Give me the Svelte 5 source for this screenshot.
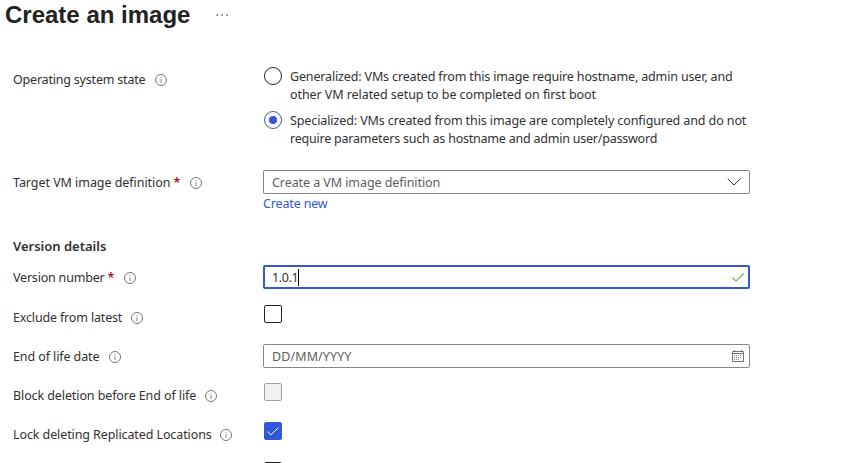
<script>
  let version = $state('1.0.1');
  const options = [
    { selected: false, lines: [['Generalized: VMs created from this image require hostname, admin user, and', -0.15], ['other VM related setup to be completed on first boot', -0.07]] },
    { selected: true, lines: [['Specialized: VMs created from this image are completely configured and do not', -0.105], ['require parameters such as hostname and admin user/password', -0.22]] }
  ];
</script>

{#snippet label(text, width, tracking, required = false)}
  <div class="label">
    <span class="name" style:width="{width}px"><span style:letter-spacing="{tracking}px">{text}</span>{#if required}<b class="star">*</b>{/if}</span>
    <svg class="info" width="12" height="12" viewBox="0 0 12 12" fill="none">
      <circle cx="6" cy="6" r="5.5" stroke="#666" stroke-width="0.9" />
      <path d="M6 5v4M6 3v1" stroke="#888" />
    </svg>
  </div>
{/snippet}

<main>
  <header>
    <h1>Create an image</h1>
    <svg width="12" height="2" viewBox="0 0 12 2" fill="#666"><path d="M.5 .2h1.6v1.5H.5zM5.3 .2h1.6v1.5H5.3zM10.2 .2h1.6v1.5h-1.6z" /></svg>
  </header>

  <section class="form">
    <div class="row os">
      {@render label('Operating system state', 133, -0.2)}
      <div class="radios">
        {#each options as option}
          <div class="option">
            <span class="radio" class:selected={option.selected}></span>
            <p>{#each option.lines as [line, tracking]}<span style:letter-spacing="{tracking}px">{line}</span>{/each}</p>
          </div>
        {/each}
      </div>
    </div>

    <div class="row target">
      {@render label('Target VM image definition', 168, -0.05, true)}
      <div>
        <div class="field">
          <span class="choice">Create a VM image definition</span>
          <svg class="chevron" width="14" height="8" viewBox="0 0 14 8" fill="none" stroke="#333" stroke-width="1"><path d="M.7.7 7 7 13.3.7" /></svg>
        </div>
        <a href="#new">Create new</a>
      </div>
    </div>

    <h2>Version details</h2>

    <div class="row">
      {@render label('Version number', 102, -0.2, true)}
      <div class="field focused">
        <span class="value">{version}</span><i class="caret"></i>
        <svg class="tick" width="12" height="9" viewBox="0 0 12 9" fill="none" stroke="#5cb82c" stroke-width="1.1"><path d="M.4 4.6 4 8.1 11.6.5" /></svg>
      </div>
    </div>
    <div class="row lower">
      {@render label('Exclude from latest', 109, -0.16)}
      <span class="box"></span>
    </div>
    <div class="row lower">
      {@render label('End of life date', 87, -0.1)}
      <div class="field day">
        <span class="date">DD/MM/YYYY</span>
        <svg class="calendar" width="12" height="12" viewBox="0 0 12 12" fill="none" stroke="#666">
          <path d="M.5 1.5h11v10H.5zM.5 3.5h11M2.5 0v2M9.5 0v2" stroke-width=".9" />
          <path d="M2 5.5h8M2 7.5h8M2 9.5h6" stroke-dasharray="1 1" stroke="#888" />
        </svg>
      </div>
    </div>
    <div class="row lower">
      {@render label('Block deletion before End of life', 183, -0.1)}
      <span class="box disabled"></span>
    </div>
    <div class="row lower">
      {@render label('Lock deleting Replicated Locations', 198, -0.1)}
      <span class="box checked">
        <svg width="12" height="9" viewBox="0 0 12 9" fill="none" stroke="#fff" stroke-width="1"><path d="M.5 4.4 4 7.9 11.5.5" /></svg>
      </span>
    </div>
    <div class="row last">
      <span></span>
      <span class="box"></span>
    </div>
  </section>
</main>

<style>
  :global(body) { margin: 0; background: #fff; overflow: hidden; }
  main { width: 851px; height: 463px; overflow: hidden; color: #323130; font: 12.5px/18px "Noto Sans", sans-serif; }
  header { display: flex; align-items: center; height: 30px; padding-left: 5px; gap: 26px; }
  h1 { margin: 0; width: 185px; font: bold 24px/30px "Liberation Sans", Arial, sans-serif; color: #222; white-space: nowrap; }
  .form { padding: 37px 0 0 13px; }
  .row { display: grid; grid-template-columns: 250px 487px; height: 39px; align-items: start; }
  .label { display: flex; align-items: center; gap: 9px; height: 24px; padding-top: 1px; white-space: nowrap; }
  .name { flex: none; }
  .star { color: #a80f22; font-weight: 600; margin-left: 3px; }
  .info { flex: none; }
  .os { height: 103px; }
  .os .label { padding-top: 0; height: 25px; }
  .lower .label { padding-top: 2px; }
  .last { padding-top: 1px; }
  .radios { display: flex; flex-direction: column; gap: 8px; }
  .option { display: flex; gap: 8px; padding-left: 1px; }
  .option p { margin: 1px 0 -1px; display: flex; flex-direction: column; white-space: nowrap; }
  .radio { box-sizing: border-box; width: 18px; height: 18px; flex: none; border: 1px solid #222; border-radius: 50%; display: grid; place-items: center; }
  .radio.selected { border-color: #3257d9; }
  .radio.selected::after { content: ""; width: 8px; height: 8px; border-radius: 50%; background: #3257d9; }
  .target { height: 67px; }
  .field { box-sizing: border-box; height: 24px; border: 1px solid #8a8886; border-radius: 2px; display: flex; align-items: center; padding: 0 5px 0 8px; color: #605e5c; white-space: nowrap; }
  .field span { padding-top: 1px; }
  .field svg { margin-left: auto; }
  .field .chevron { margin-right: 3px; }
  .choice { letter-spacing: -0.07px; }
  .value { letter-spacing: -0.35px; }
  .date { letter-spacing: 0.1px; }
  .day { margin-top: 1px; }
  .focused { border: 2px solid #3257d9; padding: 0 4px 0 7px; color: #323130; }
  .caret { width: 1px; height: 17px; background: #000; }
  a { display: block; margin-top: 1px; color: #3257d9; text-decoration: none; letter-spacing: -0.15px; }
  h2 { margin: 0; height: 28px; font: 600 13px/18px "Noto Sans", sans-serif; }
  .box { box-sizing: border-box; width: 18px; height: 18px; margin: 1px 0 0 1px; border: 1px solid #222; border-radius: 2px; display: grid; place-items: center; }
  .disabled { border-color: #a19f9d; background: #f3f2f1; }
  .checked { border-color: #3257d9; background: #3257d9; }
</style>
